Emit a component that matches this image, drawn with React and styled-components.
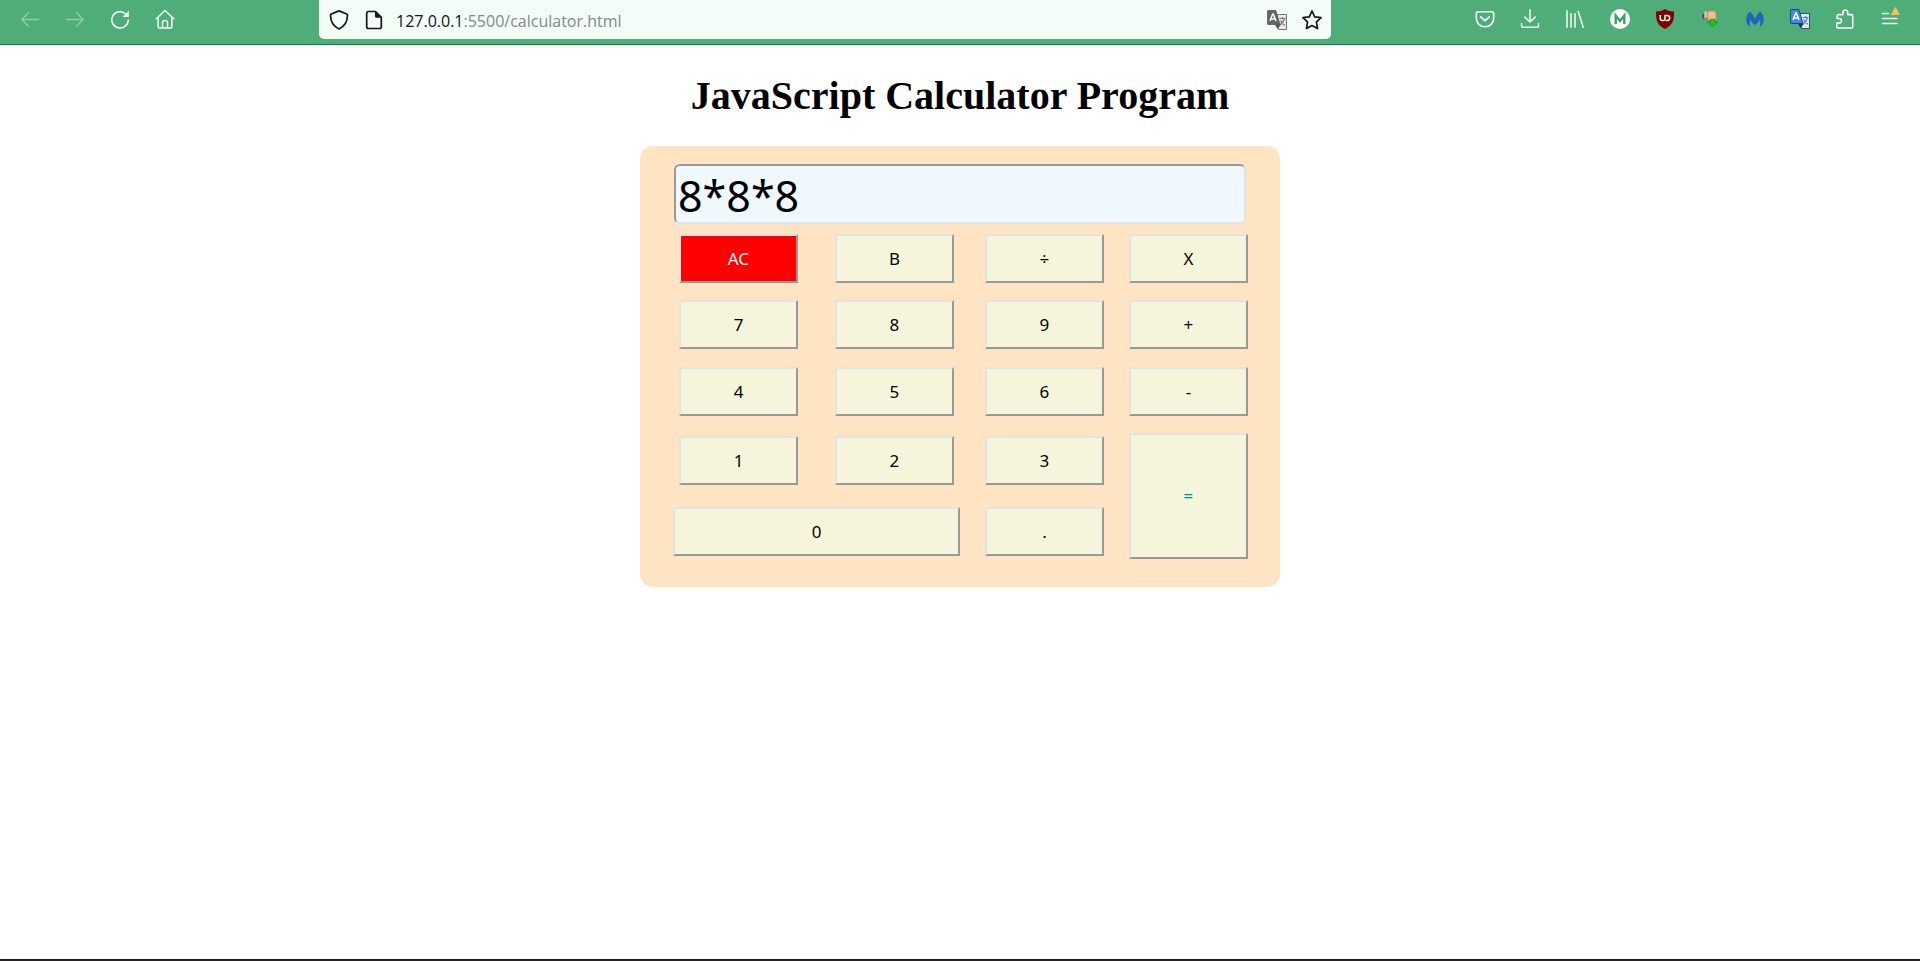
import React, { useState } from "react";
import styled, { createGlobalStyle } from "styled-components";

const GlobalStyle = createGlobalStyle`
  *, *::before, *::after { box-sizing: border-box; }
  body { margin: 0; background: #fff; }
`;

const Window = styled.div`
  min-height: 100vh;
  display: flex;
  flex-direction: column;
  border-bottom: 2px solid #262225;
`;

const Toolbar = styled.header`
  display: flex;
  align-items: flex-start;
  height: 45px;
  padding: 0 8px 0 7px;
  background: #4fad79;
  border-bottom: 1px solid #0b7f45;
`;

const ToolGroup = styled.nav`
  display: flex;
`;

const ToolButton = styled.button`
  display: flex;
  align-items: center;
  justify-content: center;
  width: 45px;
  height: 38px;
  padding: 0;
  border: 0;
  background: none;
  color: #f3fcf7;
  opacity: ${(p) => (p.disabled ? 0.4 : 1)};
`;

const AddressBar = styled.div`
  flex: 1;
  min-width: 0;
  display: flex;
  align-items: center;
  height: 39px;
  margin: 0 131px 0 132px;
  padding: 0 2px;
  border-radius: 0 0 5px 5px;
  background: #f3fcf7;
`;

const AddressButton = styled.button`
  display: flex;
  align-items: center;
  justify-content: center;
  width: 35px;
  height: 38px;
  padding: 0;
  border: 0;
  background: none;
  color: #15141a;
`;

const Address = styled.a`
  flex: 1;
  padding: 2px 0 0 5px;
  font: 16px/24px "Open Sans", "Noto Sans", sans-serif;
  color: #84898a;
  text-decoration: none;
  white-space: nowrap;
`;

const Host = styled.span`
  color: #15141a;
`;

const Page = styled.main`
  display: flex;
  flex-direction: column;
  align-items: center;
  padding: 28px 0 32px;
`;

const Title = styled.h1`
  margin: 0 0 27px;
  font: bold 40px/46px "Liberation Serif", serif;
  color: #000;
  text-align: center;
`;

const Card = styled.section`
  width: calc(100% / 3);
  min-width: 480px;
  padding: 18px 32px 28px 33px;
  border-radius: 13px;
  background: #ffe4c4;
`;

const Display = styled.input`
  display: block;
  width: calc(100% - 3px);
  height: 60px;
  margin: 0 2px 10px 1px;
  padding: 2px 2px 0;
  border: 2px solid;
  border-color: #999 #e3e3e3 #e3e3e3 #999;
  border-radius: 6px;
  background: #f0f8ff;
  color: #000;
  font: 43px/54px "Noto Sans", sans-serif;
`;

const Keypad = styled.div`
  display: grid;
  grid-template-columns: 131fr 131fr 119fr 119fr;
  grid-template-rows: 49px 51px 51px 55px 55px;
  gap: 16px 25px;
  align-items: center;
`;

const Key = styled.button`
  height: ${(p) => (p.$tall ? "100%" : "49px")};
  margin: 0 ${(p) => (p.$inset ? "6px" : "0")};
  padding: 0;
  grid-column: span ${(p) => (p.$wide ? 2 : 1)};
  grid-row: span ${(p) => (p.$tall ? 2 : 1)};
  border: 2px solid;
  border-color: #e3e3e3 #999 #999 #e3e3e3;
  border-radius: 0;
  background: ${(p) => (p.$clear ? "#f00" : "#f5f5dc")};
  color: ${(p) => (p.$clear ? "#fff" : p.$tall ? "#008b9b" : "#000")};
  font: 17px/20px "Noto Sans", sans-serif;
`;

const stroke = { fill: "none", stroke: "currentColor", strokeWidth: 1.5, strokeLinecap: "round", strokeLinejoin: "round" };

const Icon = ({ children, size = 20 }) => (
  <svg width={size} height={size} viewBox="0 0 20 20" aria-hidden="true">{children}</svg>
);

const BackIcon = () => <Icon><path {...stroke} strokeWidth="1.300" d="M18.500 10.500H1.800M8.500 3.800 1.800 10.500l6.700 6.700" /></Icon>;
const ForwardIcon = () => <Icon><path {...stroke} strokeWidth="1.300" d="M1.500 10.500h16.700M11.500 3.800l6.700 6.700-6.700 6.700" /></Icon>;
const ReloadIcon = () => (
  <Icon>
    <path {...stroke} d="M18.200 11A8.200 8.200 0 1 1 15.500 4.800" />
    <path fill="currentColor" d="M18.800 1.700v5.700a.6.6 0 0 1-.6.6h-5.500z" />
  </Icon>
);
const HomeIcon = () => (
  <Icon>
    <path {...stroke} d="M1.200 9.800 10 1.500l8.800 8.300M3.100 8.500v9.200c0 .9.500 1.300 1.300 1.300h11.200c.8 0 1.300-.4 1.300-1.300V8.500M7.500 18.800v-5.300c0-1.200.8-1.900 2.500-1.900s2.500.7 2.500 1.900v5.300" />
  </Icon>
);
const ShieldIcon = () => (
  <Icon><path {...stroke} strokeWidth="1.700" d="M10 .9 17.700 4c.5.200.8.700.8 1.200-.1 6.300-3 11.200-8.500 13.700C4.500 16.400 1.600 11.500 1.500 5.200c0-.5.300-1 .8-1.200z" /></Icon>
);
const PageIcon = () => (
  <Icon>
    <path {...stroke} strokeWidth="1.700" d="M11.500 1.500H4.500c-1 0-1.800.8-1.800 1.800v13.400c0 1 .8 1.800 1.800 1.800h11c1 0 1.800-.8 1.800-1.800V7.300z" />
    <path fill="currentColor" d="M11 1v5.300c0 .9.600 1.500 1.500 1.500h5.300z" />
  </Icon>
);
const StarIcon = () => (
  <Icon><path {...stroke} strokeWidth="1.700" d="m10 1 2.700 5.800 6.300.8-4.600 4.500 1.200 6.500L10 15.500l-5.600 3.100 1.200-6.500L1 7.600l6.300-.8z" /></Icon>
);
const PocketIcon = () => (
  <Icon>
    <path {...stroke} strokeWidth="1.600" d="M3.300 2.800h13.400c1.200 0 2 .8 2 2v4.300c0 5-3.900 8.700-8.700 8.700S1.300 14.100 1.300 9.100V4.800c0-1.200.8-2 2-2z" />
    <path {...stroke} strokeWidth="1.800" d="m5.800 7.900 4.200 4 4.200-4" />
  </Icon>
);
const DownloadIcon = () => (
  <Icon><path {...stroke} d="M10 .8v12M4.800 8l5.200 5L15.200 8M1.500 14.500v2c0 1.100.7 1.800 1.800 1.800h13.400c1.100 0 1.800-.7 1.800-1.800v-2" /></Icon>
);
const LibraryIcon = () => <Icon><path {...stroke} d="M2 1.800v16.400M6 4.800v13.400M10 4.800v13.400M13.200 2.500l5 15.700" /></Icon>;
const MIcon = () => (
  <Icon>
    <circle cx="10" cy="10" r="10" fill="#fff" />
    <path fill="none" stroke="#37a56b" strokeWidth="2.400" d="M5.700 15V6.500L10 12l4.300-5.500V15" />
  </Icon>
);
const BlockerIcon = () => (
  <Icon>
    <path fill="#800000" d="M10 0c2.500 1.700 5.500 2.500 9 2.500 0 8-.3 13-9 17.500C1.300 15.500 1 10.500 1 2.500 4.500 2.500 7.500 1.700 10 0z" />
    <path fill="none" stroke="#fff" strokeWidth="1.500" d="M5.300 6v3.500a2 2 0 0 0 2 2h1.200a1.700 1.700 0 0 0 1.500-1.700V6" />
    <path fill="none" stroke="#fff" strokeWidth="1.500" d="M10 6.500h2.200a2.500 2.500 0 0 1 0 5H10.500" />
  </Icon>
);
const GrabberIcon = () => (
  <Icon>
    <path fill="#8b8082" d="M2.500 3.500h4v8h-4z" />
    <path fill="#514a4d" d="M2.500 5h1.500v4.500H2.500z" />
    <path fill="#d3cdd0" d="M4.500 2.500h3v6h-3z" />
    <path fill="#e8b587" stroke="#a97c58" strokeWidth=".8" d="M7.500 3c1-1.500 5.500-1.800 7.500-.8 1.700.8 2 7.300.7 9H9C7 10.500 6.500 5 7.500 3z" />
    <path fill="none" stroke="#f7d3ad" d="M9 4.500h5M9 7h5" />
    <path fill="#1fc512" stroke="#16850f" strokeWidth=".7" d="M10.500 10.500h4v2.500H17.500L12.500 18 7.500 13h3z" />
  </Icon>
);
const WingsIcon = () => (
  <Icon>
    <path fill="#1f65b8" d="M5 2.500c1.800 1.500 3.800 4.500 5 7.500 1.200-3 3.200-6 5-7.500 2.600 1.900 3.800 5 3.800 8.200 0 3.100-1.400 5.700-4.100 7.200.9-2.700.8-5-.2-7.400C13.500 13.500 11.500 15 10 16c-1.500-1-3.500-2.500-4.500-5.500-1 2.400-1.100 4.700-.2 7.400-2.700-1.500-4.100-4.100-4.100-7.200C1.200 7.500 2.400 4.400 5 2.500z" />
  </Icon>
);
const TranslateIcon = ({ front = "#4284f3", back = "#e4e6ea", ink = "#4284f3", edge = "#17334f" }) => (
  <Icon>
    <path fill={back} stroke={edge} strokeWidth=".8" d="M9 4.500h10.500v15h-8z" />
    <path fill={edge} d="M8 14.500h6l-3.500 4.500z" />
    <path fill="none" stroke={ink} strokeWidth="1.200" d="M12.500 8.500h6M15.500 7v1.500M17.500 8.500c-.7 3-2.300 5-4.500 6.500M13.500 10.500c1 2.200 2.500 3.700 4.500 4.700" />
    <path fill={front} stroke={edge} strokeWidth=".8" d="M1.200.500h7.600l4.200 14H1.200a.8.800 0 0 1-.8-.8V1.300a.8.800 0 0 1 .8-.8z" />
    <path fill="none" stroke="#fff" strokeWidth="1.500" d="m3 11 2.700-7h.6L9 11M4 9h4" />
  </Icon>
);
const PuzzleIcon = () => (
  <Icon>
    <path {...stroke} strokeWidth="1.600" d="M2.500 19h13.700c1 0 1.600-.6 1.600-1.600V7.200c0-1-.6-1.600-1.600-1.600h-3.500V3.500c0-1.500-.9-2.500-2.300-2.500S8 2 8 3.500v2.100H3.700c-1 0-1.600.6-1.600 1.600v2.300h1.600c1.700 0 2.800.9 2.800 2.300s-1.100 2.300-2.800 2.300H1.800v3.900c0 .6.200 1 .7 1" />
  </Icon>
);
const MenuIcon = () => (
  <svg width="20" height="28" viewBox="0 0 20 28" aria-hidden="true">
    <path {...stroke} d="M2.500 8.500h6M2.500 13.500h14.500M2.500 18.500h14.500" />
    <path fill="#ffbd4f" stroke="#ffbd4f" strokeLinejoin="round" d="m15.500 2.500 3.900 7h-7.800z" />
  </svg>
);

const navigation = [
  ["Back", BackIcon, true],
  ["Forward", ForwardIcon, true],
  ["Reload", ReloadIcon],
  ["Home", HomeIcon],
];

const extensions = [
  ["Save to Pocket", PocketIcon],
  ["Downloads", DownloadIcon],
  ["Library", LibraryIcon],
  ["Account", MIcon],
  ["Content blocker", BlockerIcon],
  ["Download manager", GrabberIcon],
  ["Browser guard", WingsIcon],
  ["Translate", TranslateIcon],
  ["Extensions", PuzzleIcon],
  ["Menu", MenuIcon],
];

const keys = [
  { label: "AC", inset: true, clear: true },
  { label: "B", inset: true },
  { label: "÷" },
  { label: "X" },
  { label: "7", inset: true },
  { label: "8", inset: true },
  { label: "9" },
  { label: "+" },
  { label: "4", inset: true },
  { label: "5", inset: true },
  { label: "6" },
  { label: "-" },
  { label: "1", inset: true },
  { label: "2", inset: true },
  { label: "3" },
  { label: "=", tall: true },
  { label: "0", wide: true },
  { label: "." },
];

const symbols = { "÷": "/", X: "*" };

function ToolButtons({ items, label }) {
  return (
    <ToolGroup aria-label={label}>
      {items.map(([name, Glyph, disabled]) => (
        <ToolButton key={name} type="button" aria-label={name} disabled={disabled}>
          <Glyph />
        </ToolButton>
      ))}
    </ToolGroup>
  );
}

function evaluate(expression) {
  const tokens = expression.match(/\d*\.?\d+|[-+*/]/g) || [];
  const terms = [Number(tokens[0] || 0)];
  for (let i = 1; i + 1 < tokens.length; i += 2) {
    const value = Number(tokens[i + 1]);
    if (tokens[i] === "*") terms.push(terms.pop() * value);
    else if (tokens[i] === "/") terms.push(terms.pop() / value);
    else terms.push(tokens[i] === "-" ? -value : value);
  }
  return String(terms.reduce((sum, term) => sum + term, 0));
}

export default function App() {
  const [expression, setExpression] = useState("8*8*8");

  const press = (label) => {
    if (label === "AC") setExpression("");
    else if (label === "B") setExpression((e) => e.slice(0, -1));
    else if (label === "=") setExpression(evaluate);
    else setExpression((e) => e + (symbols[label] || label));
  };

  return (
    <>
      <GlobalStyle />
      <Window>
        <Toolbar>
          <ToolButtons items={navigation} label="Navigation" />
          <AddressBar>
            <AddressButton type="button" aria-label="Tracking protection"><ShieldIcon /></AddressButton>
            <AddressButton type="button" aria-label="Site information"><PageIcon /></AddressButton>
            <Address href="#"><Host>127.0.0.1</Host>:5500/calculator.html</Address>
            <AddressButton type="button" aria-label="Translate page">
              <TranslateIcon front="#666" back="#e6e9e7" ink="#777" edge="#555" />
            </AddressButton>
            <AddressButton type="button" aria-label="Bookmark"><StarIcon /></AddressButton>
          </AddressBar>
          <ToolButtons items={extensions} label="Extensions" />
        </Toolbar>
        <Page>
          <Title>JavaScript Calculator Program</Title>
          <Card>
            <Display
              type="text"
              aria-label="Expression"
              value={expression}
              onChange={(e) => setExpression(e.target.value)}
            />
            <Keypad>
              {keys.map((k) => (
                <Key
                  key={k.label}
                  type="button"
                  $inset={k.inset}
                  $clear={k.clear}
                  $wide={k.wide}
                  $tall={k.tall}
                  onClick={() => press(k.label)}
                >
                  {k.label}
                </Key>
              ))}
            </Keypad>
          </Card>
        </Page>
      </Window>
    </>
  );
}
